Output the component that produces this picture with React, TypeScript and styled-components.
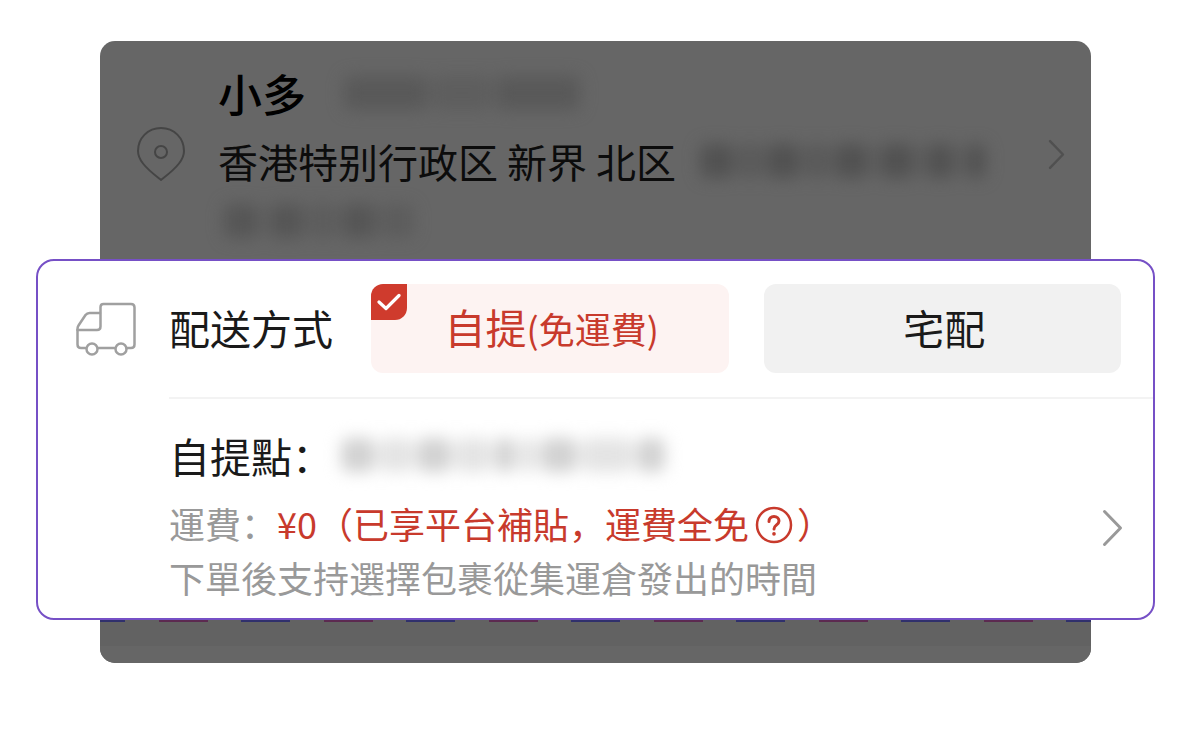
import React, { useState } from "react";
import styled, { createGlobalStyle } from "styled-components";

const GlobalStyle = createGlobalStyle`
  *, *::before, *::after { box-sizing: border-box; }
  body {
    margin: 0;
    background: #fff;
    font-family: "Noto Sans CJK SC", "Liberation Sans", sans-serif;
  }
  button { font: inherit; color: inherit; border: 0; padding: 0; background: none; cursor: pointer; }
  h2, p { margin: 0; font-weight: 400; }
  svg { display: block; flex: none; }
`;

const Page = styled.main`
  padding: 41px 109px 89px 100px;
`;

const OrderCard = styled.section`
  background: #666;
  border-radius: 15px;
`;

const Address = styled.div`
  display: flex;
  align-items: center;
  height: 218px;
  padding: 8px 26px 0 36px;
  color: #0c0c0c;
`;

const AddressText = styled.div`
  flex: 1;
  min-width: 0;
  margin-left: 32px;
  padding-bottom: 3px;
`;

const AddressLine = styled.div`
  display: flex;
  align-items: center;
  height: 60px;
  font-size: 40px;
  line-height: 60px;
  white-space: nowrap;
`;

const NameLine = styled(AddressLine)`
  height: 76px;
  font-size: 44px;
  font-weight: 500;
  color: #000;
`;

const ArrowButton = styled.button<{ $muted?: boolean }>`
  display: flex;
  align-items: center;
  justify-content: flex-end;
  width: 32px;
  height: 48px;
  color: ${(p) => (p.$muted ? "#505050" : "#999")};
  margin-top: ${(p) => (p.$muted ? "0" : "10px")};
`;

const Smudge = styled.span<{ $tone: string; $gap: number }>`
  display: flex;
  gap: 4px;
  height: 34px;
  margin-left: ${(p) => p.$gap}px;
  filter: blur(8px);
  color: ${(p) => p.$tone};
`;

const Blot = styled.i<{ $width: number; $faint?: boolean }>`
  width: ${(p) => p.$width}px;
  border-radius: 8px;
  background: currentColor;
  opacity: ${(p) => (p.$faint ? 0.6 : 1)};
`;

const DeliveryPanel = styled.section`
  margin: 0 -64px;
  border: 2px solid #7650c6;
  border-radius: 18px;
  background: #fff;
  color: #1a1a1a;
`;

const MethodRow = styled.div`
  display: flex;
  align-items: center;
  padding: 23px 32px 24px 38px;
`;

const MethodTitle = styled.h2`
  margin: 0 38px 0 33px;
  padding-bottom: 4px;
  font-size: 41px;
  line-height: 60px;
  white-space: nowrap;
`;

const Options = styled.div`
  display: flex;
  flex: 1;
  gap: 35px;
`;

const Option = styled.button<{ $selected: boolean }>`
  position: relative;
  flex: 1;
  height: 89px;
  padding: 0 0 4px 4px;
  border-radius: 12px;
  background: ${(p) => (p.$selected ? "#fdf3f2" : "#f1f1f1")};
  color: ${(p) => (p.$selected ? "#c83a2c" : "#1a1a1a")};
  font-size: 41px;
  line-height: 60px;
  white-space: nowrap;
`;

const OptionNote = styled.span`
  font-size: 36px;
`;

const SelectedMark = styled.span`
  position: absolute;
  top: 0;
  left: 0;
  display: grid;
  place-items: center;
  width: 36px;
  height: 36px;
  border-radius: 12px 0;
  background: #cf3b2d;
`;

const Details = styled.div`
  margin-left: 131px;
  padding: 26px 30px 14px 0;
  border-top: 2px solid #f3f3f3;
`;

const PickupLine = styled.div`
  display: flex;
  align-items: center;
  margin-bottom: 11px;
  font-size: 41px;
  line-height: 60px;
  white-space: nowrap;
`;

const FeeLine = styled.div`
  display: flex;
  align-items: center;
  height: 54px;
  font-size: 36px;
  line-height: 54px;
  color: #999;
  white-space: nowrap;
`;

const Fee = styled.span`
  display: flex;
  flex: 1;
  align-items: center;
  color: #c83a2c;
`;

const HelpButton = styled.button`
  margin: 4px 4px 0 6px;
`;

const Note = styled.p`
  font-size: 36px;
  line-height: 54px;
  color: #999;
`;

const CardFoot = styled.div`
  height: 43px;
  border-radius: 0 0 15px 15px;
  background:
    repeating-linear-gradient(
      to right,
      #30306c 0 25px, transparent 25px 59px,
      #5c2a50 59px 108px, transparent 108px 141px,
      #30306c 141px 165px
    ) 0 0 / 100% 2px no-repeat,
    linear-gradient(#626262 0 26px, #666 26px);
`;

const Arrow = ({ small }: { small?: boolean }) => (
  <svg width={small ? 17 : 21} height={small ? 31 : 38} viewBox="0 0 21 38" fill="none" stroke="currentColor" strokeWidth="3" strokeLinecap="round" strokeLinejoin="round">
    <path d="M2.5 2.5 18.5 19 2.5 35.5" />
  </svg>
);

const Pin = () => (
  <svg width="50" height="56" viewBox="0 0 50 56" fill="none" stroke="#454545" strokeWidth="2" strokeLinejoin="round">
    <path d="M25 54C20 50 12 44 7 37.5 3.500 33 2 29 2 25 2 12 12 2 25 2s23 10 23 23c0 4-1.500 8-5 12.500C38 44 30 50 25 54Z" />
    <circle cx="25" cy="26" r="6" />
  </svg>
);

const Truck = () => (
  <svg width="60" height="54" viewBox="0 0 60 54" fill="none" stroke="#a0a0a0" strokeWidth="2.500" strokeLinecap="round" strokeLinejoin="round">
    <path d="M9.500 46H5q-3.500 0-3.500-3.500V27q0-2 1-3.500L9.500 13q1.500-2 4-2H24" />
    <path d="M1.500 28H21q3.500 0 3.500-3.500V5q0-3 3-3H55q3.500 0 3.500 3.500v37Q58.500 46 55 46h-4.500M22 46h17" />
    <circle cx="16" cy="47" r="5.500" />
    <circle cx="45" cy="47" r="5.500" />
  </svg>
);

const Check = () => (
  <svg width="24" height="18" viewBox="0 0 24 18" fill="none" stroke="#fff" strokeWidth="3.200" strokeLinecap="round" strokeLinejoin="round">
    <path d="M2 9 9 15.500 22 2.500" />
  </svg>
);

const Question = () => (
  <svg width="38" height="38" viewBox="0 0 38 38" fill="none" stroke="#c83a2c" strokeLinecap="round" strokeLinejoin="round">
    <circle cx="19" cy="19" r="17" strokeWidth="2.500" />
    <path d="M14 15.500c0-3 2-5 5-5s5 2 5 4.500c0 2-1.200 3-2.700 4.200S19 21.200 19 23" strokeWidth="3" />
    <path d="M19 27.800v.1" strokeWidth="3.600" />
  </svg>
);

const Redacted = ({ blots, tone, gap = 0 }: { blots: number[]; tone: string; gap?: number }) => (
  <Smudge $tone={tone} $gap={gap} aria-hidden="true">
    {blots.map((width, i) => (
      <Blot key={i} $width={width} $faint={i % 2 === 1} />
    ))}
  </Smudge>
);

export default function App() {
  const [method, setMethod] = useState<"pickup" | "home">("pickup");

  return (
    <>
      <GlobalStyle />
      <Page>
        <OrderCard>
          <Address>
            <Pin />
            <AddressText>
              <NameLine>
                小多
                <Redacted blots={[84, 60, 84]} tone="#595959" gap={38} />
              </NameLine>
              <AddressLine>
                香港特别行政区 新界 北区
                <Redacted blots={[34, 24, 34, 26, 34, 4, 34, 4, 28, 4, 20]} tone="#525252" gap={24} />
              </AddressLine>
              <AddressLine>
                <Redacted blots={[34, 4, 34, 30, 34, 34]} tone="#565656" gap={6} />
              </AddressLine>
            </AddressText>
            <ArrowButton $muted aria-label="編輯地址">
              <Arrow small />
            </ArrowButton>
          </Address>

          <DeliveryPanel>
            <MethodRow>
              <Truck />
              <MethodTitle id="method-title">配送方式</MethodTitle>
              <Options role="group" aria-labelledby="method-title">
                <Option $selected={method === "pickup"} aria-pressed={method === "pickup"} onClick={() => setMethod("pickup")}>
                  {method === "pickup" && <SelectedMark><Check /></SelectedMark>}
                  自提<OptionNote>(免運費)</OptionNote>
                </Option>
                <Option $selected={method === "home"} aria-pressed={method === "home"} onClick={() => setMethod("home")}>
                  {method === "home" && <SelectedMark><Check /></SelectedMark>}
                  宅配
                </Option>
              </Options>
            </MethodRow>

            <Details>
              <PickupLine>
                自提點：
                <Redacted blots={[34, 34, 34, 36, 20, 18, 36, 52, 28]} tone="#d2d2d2" gap={8} />
              </PickupLine>
              <FeeLine>
                運費：
                <Fee>
                  ¥0（已享平台補貼，運費全免
                  <HelpButton aria-label="運費說明"><Question /></HelpButton>
                  ）
                </Fee>
                <ArrowButton aria-label="選擇自提點">
                  <Arrow />
                </ArrowButton>
              </FeeLine>
              <Note>下單後支持選擇包裹從集運倉發出的時間</Note>
            </Details>
          </DeliveryPanel>

          <CardFoot />
        </OrderCard>
      </Page>
    </>
  );
}
